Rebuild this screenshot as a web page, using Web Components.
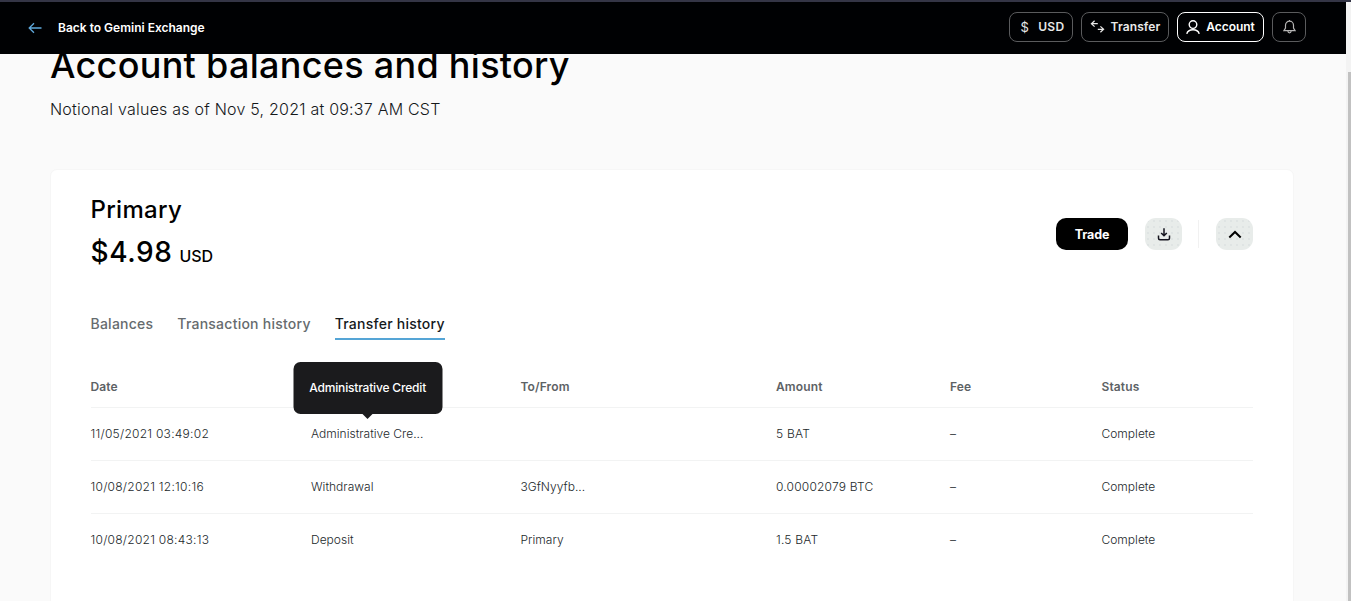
<!DOCTYPE html>
<html lang="en">
<head>
<meta charset="utf-8">
<title>Account balances and history</title>
<style>
  html, body {
    margin: 0;
    height: 100%;
    overflow: hidden;
  }
  body {
    background: #fafafa;
    color: #000;
    font-family: Inter, "Liberation Sans", sans-serif;
  }
</style>
</head>
<body>
<account-page></account-page>

<script>
const ICONS = {
  back: '<svg width="14" height="12" viewBox="0 0 14 12" fill="none" stroke="#5fa9dc" stroke-width="1.3"><path d="M6 1.2 1.2 6 6 10.8M1.2 6H13.5"/></svg>',
  transfer: '<svg width="15" height="13" viewBox="0 0 15 13" fill="none" stroke="currentColor" stroke-width="1.2"><path d="M4.6.8 1.4 3.7l3.2 2.9M1.4 3.7H7.8M10.4 6.4l3.2 2.9-3.2 2.9M13.6 9.3H7.8"/></svg>',
  user: '<svg width="14" height="14" viewBox="0 0 14 14" fill="none" stroke="currentColor" stroke-width="1.4"><circle cx="7" cy="4.6" r="3.8"/><path d="M.8 13.8C1.5 10.8 4 9.7 7 9.7s5.5 1.1 6.2 4.1"/></svg>',
  bell: '<svg width="13" height="14" viewBox="0 0 13 14" fill="none" stroke="currentColor" stroke-width="1.2"><path d="M6.5 1V0M2.5 8V5.2a4 4 0 0 1 8 0V8l1.6 2.6H.9zM4.8 11c.2 1.4.8 1.9 1.7 1.9s1.5-.5 1.7-1.9"/></svg>',
  download: '<svg width="14" height="13" viewBox="0 0 14 13" fill="none" stroke="#15151f" stroke-width="1.5"><path d="M7 .3V7.6M4.2 5 7 7.8 9.8 5M1.5 7.5V10.3q0 1.5 1.5 1.5h8q1.5 0 1.5-1.5V7.5"/></svg>',
  up: '<svg width="14" height="9" viewBox="0 0 14 9" fill="none" stroke="#000" stroke-width="2"><path d="M1.3 7.5 7 2l5.7 5.5"/></svg>'
};

const TRANSFERS = [
  { date: '11/05/2021 03:49:02', type: 'Administrative Cre...', party: '', amount: '5 BAT', fee: '–', status: 'Complete', tip: 'Administrative Credit' },
  { date: '10/08/2021 12:10:16', type: 'Withdrawal', party: '3GfNyyfb...', amount: '0.00002079 BTC', fee: '–', status: 'Complete' },
  { date: '10/08/2021 08:43:13', type: 'Deposit', party: 'Primary', amount: '1.5 BAT', fee: '–', status: 'Complete' }
];

// Outlined button in the top bar
class NavButton extends HTMLElement {
  constructor() {
    super();
    this.attachShadow({ mode: 'open' });
  }

  connectedCallback() {
    const icon = ICONS[this.getAttribute('icon')] || '';
    this.shadowRoot.innerHTML = `
      <style>
        :host {
          display: flex;
          align-items: center;
          justify-content: center;
          box-sizing: border-box;
          height: 30px;
          padding-bottom: 1px;
          border: 1px solid #5a5b5d;
          border-radius: 8px;
          color: #e8e8e8;
          font-size: 12px;
          font-weight: 600;
          letter-spacing: 0.1px;
          gap: 5px;
          white-space: nowrap;
        }
        :host([active]) { border-color: #fff; color: #fff; letter-spacing: -0.05px; }
        svg { display: block; flex: none; }
      </style>
      ${icon}<slot></slot>
    `;
  }
}

customElements.define('nav-button', NavButton);

class TopBar extends HTMLElement {
  constructor() {
    super();
    this.attachShadow({ mode: 'open' });
  }

  connectedCallback() {
    this.shadowRoot.innerHTML = `
      <style>
        :host {
          display: flex;
          align-items: center;
          justify-content: space-between;
          box-sizing: border-box;
          flex: none;
          height: 52px;
          padding: 0 40px 2px 28px;
          background: #000103;
          color: #fff;
        }
        .back {
          display: flex;
          align-items: center;
          gap: 16px;
          font-size: 12px;
          font-weight: 600;
        }
        .back svg { margin-top: 2px; }
        .actions { display: flex; gap: 8px; }
        .usd { width: 64px; gap: 9px; padding-left: 3px; letter-spacing: 0.3px; }
        .transfer { width: 88px; gap: 6px; }
        .account { width: 87px; gap: 6px; }
        .bell { width: 34px; color: #b5b5b5; }
        .sign { font-weight: 400; font-size: 13px; }
      </style>
      <div class="back">${ICONS.back}<span>Back to Gemini Exchange</span></div>
      <div class="actions">
        <nav-button class="usd"><span class="sign">$</span><span>USD</span></nav-button>
        <nav-button class="transfer" icon="transfer">Transfer</nav-button>
        <nav-button class="account" icon="user" active>Account</nav-button>
        <nav-button class="bell" icon="bell"></nav-button>
      </div>
    `;
  }
}

customElements.define('top-bar', TopBar);

class TabList extends HTMLElement {
  constructor() {
    super();
    this.attachShadow({ mode: 'open' });
  }

  connectedCallback() {
    this.shadowRoot.innerHTML = `
      <style>
        :host {
          display: flex;
          gap: 24px;
          font-size: 14px;
          font-weight: 500;
          line-height: 18px;
          letter-spacing: 0.24px;
        }
        ::slotted(span) {
          color: #666b6e;
          padding-bottom: 5px;
          border-bottom: 2px solid transparent;
          white-space: nowrap;
        }
        ::slotted(.active) {
          color: #15191c;
          border-color: #55a5d6;
        }
      </style>
      <slot></slot>
    `;
  }
}

customElements.define('tab-list', TabList);

// Dark bubble above its anchor
class TipBubble extends HTMLElement {
  constructor() {
    super();
    this.attachShadow({ mode: 'open' });
  }

  connectedCallback() {
    this.shadowRoot.innerHTML = `
      <style>
        :host {
          position: absolute;
          left: calc(50% + 0.5px);
          bottom: 27px;
          transform: translateX(-50%);
          box-sizing: border-box;
          width: 149px;
          height: 52px;
          border-radius: 7px;
          background: #1b1b1d;
          color: #fff;
          font-size: 12px;
          font-weight: 500;
          line-height: 52px;
          letter-spacing: -0.18px;
          text-align: center;
          white-space: nowrap;
        }
        :host::after {
          content: '';
          position: absolute;
          left: 69px;
          top: 52px;
          border: 5px solid transparent;
          border-top-color: #1b1b1d;
          border-bottom: 0;
        }
      </style>
      <slot></slot>
    `;
  }
}

customElements.define('tip-bubble', TipBubble);

class TransferTable extends HTMLElement {
  constructor() {
    super();
    this.attachShadow({ mode: 'open' });
  }

  connectedCallback() {
    const rows = TRANSFERS.map(t => `
      <div class="row">
        <span class="date">${t.date}</span>
        <span><span class="anchor">${t.type}${t.tip ? `<tip-bubble>${t.tip}</tip-bubble>` : ''}</span></span>
        <span>${t.party}</span>
        <span class="amount">${t.amount}</span>
        <span>${t.fee}</span>
        <span>${t.status}</span>
      </div>
    `).join('');

    this.shadowRoot.innerHTML = `
      <style>
        :host { display: block; font-size: 12px; }
        .row {
          display: grid;
          grid-template-columns: 220.5px 209.5px 255.5px 174px 151.5px 1fr;
          align-items: center;
          box-sizing: border-box;
          height: 53px;
          padding-bottom: 1px;
          border-bottom: 1px solid #f2f3f3;
          color: #22282b;
          font-weight: 300;
          letter-spacing: 0.01px;
        }
        .row:last-child { border-color: transparent; }
        .date { letter-spacing: 0.26px; }
        .amount { letter-spacing: 0.2px; }
        .head {
          height: 42px;
          color: #5d6265;
          font-weight: 600;
          letter-spacing: 0.12px;
        }
        .anchor { position: relative; display: inline-block; }
      </style>
      <div class="row head">
        <span>Date</span><span></span><span>To/From</span>
        <span>Amount</span><span>Fee</span><span>Status</span>
      </div>
      ${rows}
    `;
  }
}

customElements.define('transfer-table', TransferTable);

class AccountCard extends HTMLElement {
  constructor() {
    super();
    this.attachShadow({ mode: 'open' });
  }

  connectedCallback() {
    this.shadowRoot.innerHTML = `
      <style>
        :host {
          display: block;
          box-sizing: border-box;
          width: 1244px;
          height: 460px;
          padding: 23px 40px 0 39.5px;
          background: #fff;
          border: 1px solid #f6f6f6;
          border-radius: 7px;
        }
        .summary {
          display: flex;
          justify-content: space-between;
          height: 122px;
        }
        .name {
          font-size: 24px;
          font-weight: 500;
          line-height: 34px;
          letter-spacing: 0.3px;
        }
        .value {
          display: flex;
          align-items: baseline;
          gap: 7px;
          margin-top: 5px;
          font-size: 28px;
          font-weight: 550;
          line-height: 40px;
          letter-spacing: 0.6px;
        }
        .value small {
          font-size: 16px;
          font-weight: 500;
          letter-spacing: -0.1px;
        }
        .actions {
          display: flex;
          align-items: center;
          height: 32px;
          margin-top: 25px;
        }
        .trade {
          width: 72px;
          height: 32px;
          border-radius: 10px;
          background: #000;
          color: #fff;
          font-size: 12.5px;
          font-weight: 700;
          line-height: 33px;
          text-align: center;
          letter-spacing: -0.1px;
        }
        .icon {
          display: flex;
          align-items: center;
          justify-content: center;
          width: 37px;
          height: 32px;
          border-radius: 11px;
          background-color: #e8ecea;
          background-image: radial-gradient(circle, #d3d9da 0.6px, transparent 0.8px);
          background-size: 6px 6px;
        }
        .download { margin-left: 17px; }
        .rule { width: 1px; height: 28px; margin: 0 17px 0 16px; background: #f1f1f1; }
        transfer-table { margin-top: 26px; }
      </style>
      <div class="summary">
        <div>
          <div class="name">Primary</div>
          <div class="value">$4.98 <small>USD</small></div>
        </div>
        <div class="actions">
          <div class="trade">Trade</div>
          <div class="icon download">${ICONS.download}</div>
          <div class="rule"></div>
          <div class="icon">${ICONS.up}</div>
        </div>
      </div>
      <tab-list>
        <span>Balances</span>
        <span>Transaction history</span>
        <span class="active">Transfer history</span>
      </tab-list>
      <transfer-table></transfer-table>
    `;
  }
}

customElements.define('account-card', AccountCard);

class AccountPage extends HTMLElement {
  constructor() {
    super();
    this.attachShadow({ mode: 'open' });
  }

  connectedCallback() {
    this.shadowRoot.innerHTML = `
      <style>
        :host {
          display: flex;
          flex-direction: column;
          height: 601px;
          overflow: hidden;
        }
        .edge { flex: none; height: 2px; background: #343546; }
        .body { display: flex; flex: 1; min-height: 0; }
        .view {
          display: flex;
          flex-direction: column;
          width: 1346px;
          min-height: 0;
        }
        main {
          flex: 1;
          min-height: 0;
          overflow: hidden;
          padding-left: 50px;
        }
        /* the page is scrolled, so the title sits partly under the bar */
        h1 {
          margin: -13px 0 0;
          font-size: 36px;
          font-weight: 550;
          line-height: 48px;
          letter-spacing: 0.29px;
        }
        p {
          margin: 8px 0 48px;
          color: #15181a;
          font-size: 16px;
          font-weight: 300;
          line-height: 24px;
          letter-spacing: 0.22px;
        }
        .scrollbar {
          display: flex;
          flex: 1;
          justify-content: flex-end;
          background: #f3f3f3;
        }
        .thumb { width: 3px; margin-top: 70px; background: #c1c1c1; }
      </style>
      <div class="edge"></div>
      <div class="body">
        <div class="view">
          <top-bar></top-bar>
          <main>
            <h1>Account balances and history</h1>
            <p>Notional values as of Nov 5, 2021 at 09:37 AM CST</p>
            <account-card></account-card>
          </main>
        </div>
        <div class="scrollbar"><div class="thumb"></div></div>
      </div>
    `;
  }
}

customElements.define('account-page', AccountPage);
</script>
</body>
</html>
